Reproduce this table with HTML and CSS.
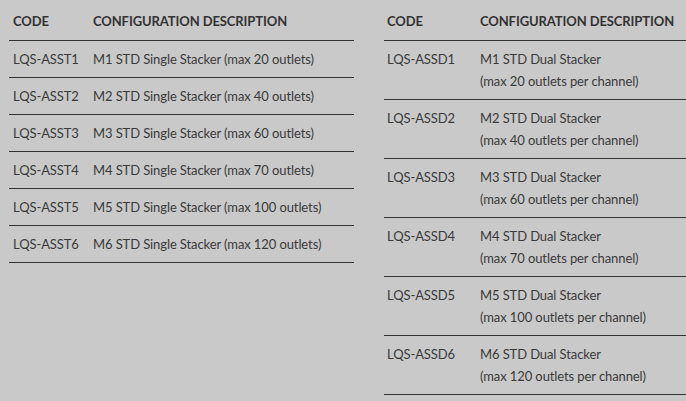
FILE: index.html
```html
<!DOCTYPE html>
<html>
<head>
<meta charset="utf-8">
<link rel="stylesheet" href="styles.css">
</head>
<body>
<div class="page">
  <table class="cfg cfg-single">
    <thead>
      <tr><th class="code">CODE</th><th>CONFIGURATION DESCRIPTION</th></tr>
    </thead>
    <tbody>
      <tr><td class="code">LQS-ASST1</td><td>M1 STD Single Stacker (max 20 outlets)</td></tr>
      <tr><td class="code">LQS-ASST2</td><td>M2 STD Single Stacker (max 40 outlets)</td></tr>
      <tr><td class="code">LQS-ASST3</td><td>M3 STD Single Stacker (max 60 outlets)</td></tr>
      <tr><td class="code">LQS-ASST4</td><td>M4 STD Single Stacker (max 70 outlets)</td></tr>
      <tr><td class="code">LQS-ASST5</td><td>M5 STD Single Stacker (max 100 outlets)</td></tr>
      <tr><td class="code">LQS-ASST6</td><td>M6 STD Single Stacker (max 120 outlets)</td></tr>
    </tbody>
  </table>
  <table class="cfg cfg-dual">
    <thead>
      <tr><th class="code">CODE</th><th>CONFIGURATION DESCRIPTION</th></tr>
    </thead>
    <tbody>
      <tr><td class="code">LQS-ASSD1</td><td>M1 STD Dual Stacker<br>(max 20 outlets per channel)</td></tr>
      <tr><td class="code">LQS-ASSD2</td><td>M2 STD Dual Stacker<br>(max 40 outlets per channel)</td></tr>
      <tr><td class="code">LQS-ASSD3</td><td>M3 STD Dual Stacker<br>(max 60 outlets per channel)</td></tr>
      <tr><td class="code">LQS-ASSD4</td><td>M4 STD Dual Stacker<br>(max 70 outlets per channel)</td></tr>
      <tr><td class="code">LQS-ASSD5</td><td>M5 STD Dual Stacker<br>(max 100 outlets per channel)</td></tr>
      <tr><td class="code">LQS-ASSD6</td><td>M6 STD Dual Stacker<br>(max 120 outlets per channel)</td></tr>
    </tbody>
  </table>
</div>
</body>
</html>
```
FILE: styles.css
```css
html, body {
  margin: 0;
  padding: 0;
  background: #c9c9c9;
  overflow: hidden;
  width: 686px;
  height: 401px;
}
.page {
  display: flex;
  align-items: flex-start;
  gap: 30px;
  padding-left: 9px;
  font-family: "Lato", "Liberation Sans", sans-serif;
  font-size: 13px;
  letter-spacing: -0.1px;
  color: #3a3a3a;
}
.cfg {
  border-collapse: collapse;
  flex: none;
}
.cfg-single { width: 345px; }
.cfg-dual { width: 302px; }
.cfg th {
  text-align: left;
  font-weight: 700;
  color: #333;
  padding: 10px 0 8px 0;
  line-height: 22px;
  border-bottom: 1px solid #333;
  white-space: nowrap;
}
.cfg td {
  text-align: left;
  vertical-align: top;
  padding: 7px 0 7px 0;
  line-height: 22px;
  border-bottom: 1px solid #333;
  white-space: nowrap;
}
.cfg .code {
  padding-left: 4px;
}
.cfg-single .code { width: 80px; }
.cfg-dual .code { width: 93px; }
.cfg-dual td.code, .cfg-dual th.code { padding-left: 3px; }
```
